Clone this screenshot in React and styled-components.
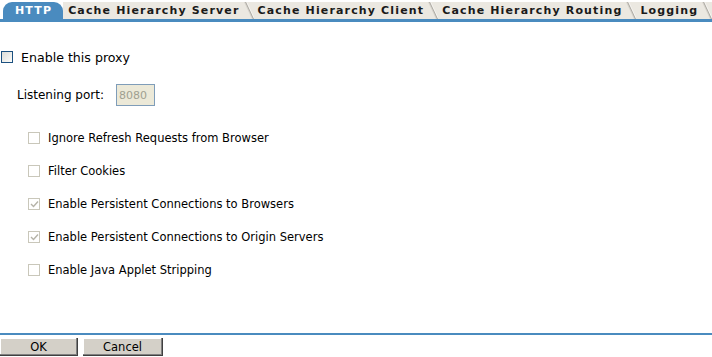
import React from "react";
import styled, { createGlobalStyle } from "styled-components";

const Global = createGlobalStyle`
  html, body { margin: 0; padding: 0; background: #fff; }
  body { font-family: "DejaVu Sans", Verdana, sans-serif; }
`;

const Page = styled.div`
  width: 712px;
  height: 357px;
  display: flex;
  flex-direction: column;
  background: #fff;
`;

const TabBar = styled.div`
  display: flex;
  align-items: flex-end;
  height: 19px;
  padding-left: 3px;
  border-bottom: 3px solid #4a8bbf;
`;

const Tab = styled.div`
  position: relative;
  height: 17px;
  display: flex;
  align-items: center;
  font-family: "DejaVu Sans", Verdana, sans-serif;
  font-weight: bold;
  font-size: 11px;
  letter-spacing: 1.15px;
  white-space: nowrap;
  color: ${(p) => (p.$active ? "#fff" : "#1a1a1a")};
  background: ${(p) => (p.$active ? "#4a8bbf" : "#ebe8e1")};
  padding: 0 ${(p) => p.$pr}px 0 ${(p) => p.$pl}px;
  border-radius: ${(p) => (p.$active ? "9px 9px 0 0" : "0")};
  z-index: ${(p) => (p.$active ? 2 : 1)};
  &::after {
    content: "";
    display: ${(p) => (p.$sep ? "block" : "none")};
    position: absolute;
    right: 4px;
    top: 0;
    width: 1px;
    height: 17px;
    background: #a9a69f;
    transform: skewX(25deg);
    box-shadow: -1px 0 0 #d6d3cc, 1px 0 0 #f7f6f3;
  }
`;

const Body = styled.div`
  flex: 1;
  display: flex;
  flex-direction: column;
  padding: 27px 0 0 1px;
  font-family: "DejaVu Sans", Tahoma, sans-serif;
  font-size: 11.5px;
  color: #000;
`;

const ProxyRow = styled.label`
  display: flex;
  align-items: center;
  gap: 8px;
  height: 16px;
  font-size: 12.6px;
`;

const MainBox = styled.span`
  width: 10px;
  height: 10px;
  border: 1px solid #1c5180;
  background: linear-gradient(135deg, #dcdcd7 0%, #f6f6f3 80%, #fff 100%);
  flex: none;
`;

const PortRow = styled.div`
  display: flex;
  align-items: center;
  margin: 19px 0 0 16px;
  gap: 12px;
  font-size: 12px;
`;

const PortInput = styled.div`
  width: 35px;
  height: 20px;
  border: 1px solid #7f9db9;
  background: #ece9d8;
  color: #a0a090;
  font-family: "DejaVu Sans", Tahoma, sans-serif;
  font-size: 11px;
  display: flex;
  align-items: center;
  padding-left: 2px;
`;

const Options = styled.div`
  display: flex;
  flex-direction: column;
  gap: 17px;
  margin: 24px 0 0 27px;
`;

const OptRow = styled.label`
  display: flex;
  align-items: center;
  gap: 8px;
  height: 16px;
`;

const DisBox = styled.span`
  width: 10px;
  height: 10px;
  border: 1px solid #c9c7ba;
  background: #fff;
  flex: none;
  display: flex;
  align-items: center;
  justify-content: center;
`;

const Footer = styled.div`
  border-top: 2px solid #4a8bbf;
  padding-top: 3px;
  margin-top: auto;
  margin-bottom: 1px;
  display: flex;
  gap: 5px;
`;

const Button = styled.button`
  width: ${(p) => p.$w}px;
  height: 18px;
  background: #d4d0c8;
  border: none;
  border-right: 1px solid #404040;
  border-bottom: 1px solid #404040;
  box-shadow: inset -1px -1px 0 #808080, inset 1px 1px 0 #fff;
  font-family: "DejaVu Sans", Tahoma, sans-serif;
  font-size: 11.5px;
  color: #000;
  padding: 0;
`;

const Check = () => (
  <svg width="9" height="8" viewBox="0 0 9 8">
    <path d="M1 4 L3.5 6.5 L8 1.5" fill="none" stroke="#b5b3a8" strokeWidth="1.4" />
  </svg>
);

const options = [
  ["Ignore Refresh Requests from Browser", false],
  ["Filter Cookies", false],
  ["Enable Persistent Connections to Browsers", true],
  ["Enable Persistent Connections to Origin Servers", true],
  ["Enable Java Applet Stripping", false],
];

const tabs = [
  { t: "HTTP", active: true, pl: 12, pr: 11 },
  { t: "Cache Hierarchy Server", pl: 5, pr: 14, sep: true },
  { t: "Cache Hierarchy Client", pl: 4, pr: 14, sep: true },
  { t: "Cache Hierarchy Routing", pl: 4, pr: 14, sep: true },
  { t: "Logging", pl: 4, pr: 14, sep: true },
];

export default function App() {
  return (
    <Page>
      <Global />
      <TabBar>
        {tabs.map((x) => (
          <Tab key={x.t} $active={x.active} $pl={x.pl} $pr={x.pr} $sep={x.sep}>
            {x.t}
          </Tab>
        ))}
      </TabBar>
      <Body>
        <ProxyRow>
          <MainBox />
          Enable this proxy
        </ProxyRow>
        <PortRow>
          Listening port:
          <PortInput>8080</PortInput>
        </PortRow>
        <Options>
          {options.map(([t, c]) => (
            <OptRow key={t}>
              <DisBox>{c && <Check />}</DisBox>
              {t}
            </OptRow>
          ))}
        </Options>
      </Body>
      <Footer>
        <Button $w={78}>OK</Button>
        <Button $w={80}>Cancel</Button>
      </Footer>
    </Page>
  );
}
